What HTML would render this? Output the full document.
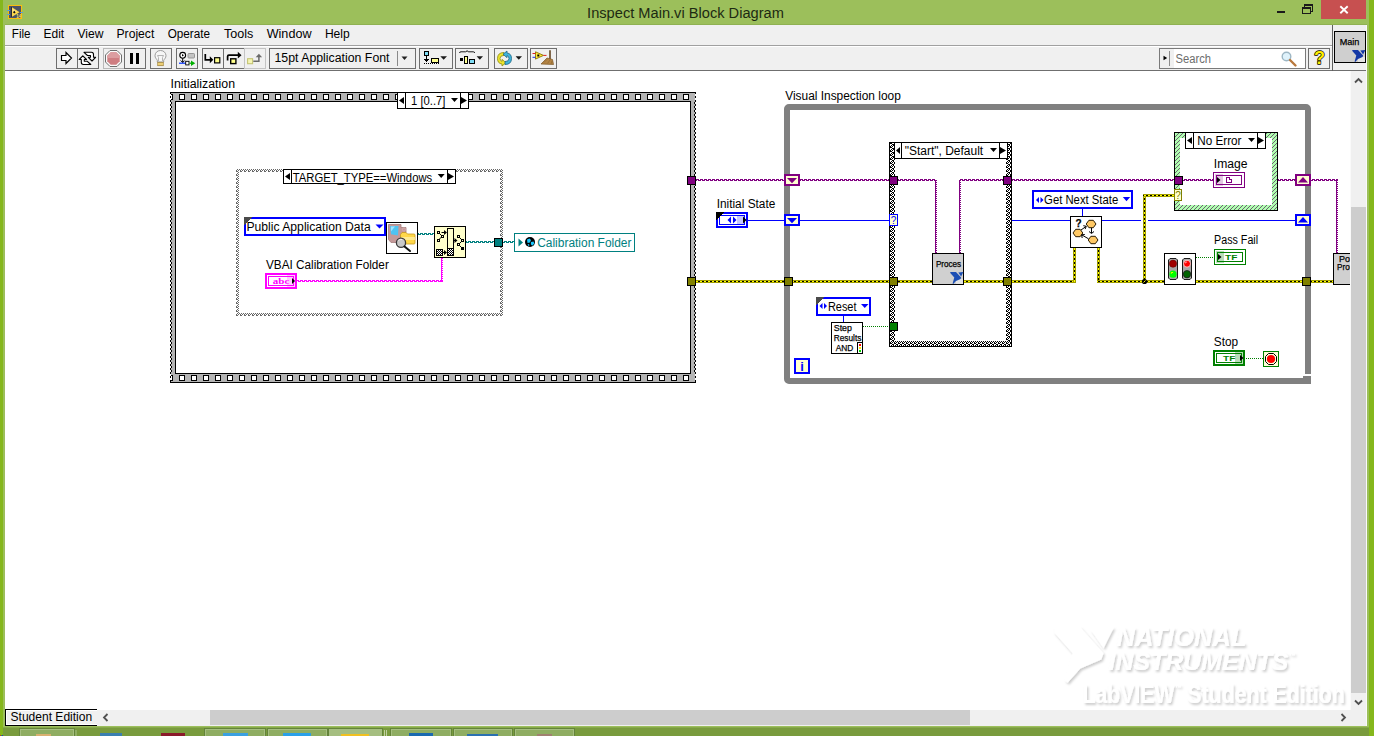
<!DOCTYPE html>
<html><head><meta charset="utf-8"><title>Inspect Main.vi Block Diagram</title>
<style>
html,body{margin:0;padding:0;background:#86b81c;overflow:hidden}
svg{display:block;font-family:"Liberation Sans",sans-serif}
text{white-space:pre}
</style></head><body>
<svg width="1374" height="736" viewBox="0 0 1374 736" shape-rendering="crispEdges">
<defs>
<pattern id="chk" x="2" y="0" width="4" height="4" patternUnits="userSpaceOnUse"><rect width="4" height="4" fill="#fff"/><rect x="2" y="0" width="1" height="1" fill="#000"/><rect x="3" y="0" width="1" height="1" fill="#000"/><rect x="1" y="1" width="1" height="1" fill="#000"/><rect x="3" y="1" width="1" height="1" fill="#000"/><rect x="0" y="2" width="1" height="1" fill="#000"/><rect x="2" y="2" width="1" height="1" fill="#000"/><rect x="0" y="3" width="1" height="1" fill="#000"/><rect x="1" y="3" width="1" height="1" fill="#000"/></pattern>
<pattern id="gchk" x="0" y="0" width="4" height="4" patternUnits="userSpaceOnUse"><rect width="4" height="4" fill="#fff"/><rect x="2" y="0" width="1" height="1" fill="#686868"/><rect x="3" y="0" width="1" height="1" fill="#686868"/><rect x="1" y="1" width="1" height="1" fill="#686868"/><rect x="3" y="1" width="1" height="1" fill="#686868"/><rect x="0" y="2" width="1" height="1" fill="#686868"/><rect x="2" y="2" width="1" height="1" fill="#686868"/><rect x="0" y="3" width="1" height="1" fill="#686868"/><rect x="1" y="3" width="1" height="1" fill="#686868"/></pattern>
<pattern id="chk1" width="2" height="2" patternUnits="userSpaceOnUse"><rect width="2" height="2" fill="#fff"/><rect x="0" y="0" width="1" height="1" fill="#000"/><rect x="1" y="1" width="1" height="1" fill="#000"/></pattern>
<pattern id="ghatch" width="4" height="4" patternUnits="userSpaceOnUse"><rect width="4" height="4" fill="#b0ffb0"/><rect x="3" y="0" width="1" height="1" fill="#6c6272"/><rect x="2" y="1" width="1" height="1" fill="#6c6272"/><rect x="1" y="2" width="1" height="1" fill="#6c6272"/><rect x="0" y="3" width="1" height="1" fill="#6c6272"/></pattern>
<filter id="wsh" x="-5%" y="-20%" width="110%" height="150%"><feDropShadow dx="1.5" dy="2" stdDeviation="1.2" flood-color="#000" flood-opacity="0.2"/></filter>
</defs>
<rect x="0" y="0" width="1374" height="736" fill="#85b71c"/>
<rect x="3" y="0" width="1366" height="728" fill="#9cbf5b"/>
<rect x="5" y="24" width="1362" height="1" fill="#8fb152"/>
<rect x="5" y="25" width="1362" height="701" fill="#f0f0f0"/>
<text x="587.1" y="18" font-size="14.67" fill="#1d2a12" textLength="196.8" lengthAdjust="spacingAndGlyphs">Inspect Main.vi Block Diagram</text>
<rect x="8" y="5" width="14" height="14" fill="#fcbc0c"/>
<rect x="9" y="6" width="12" height="12" fill="#4c5264"/>
<rect x="11" y="7" width="1" height="10" fill="#2c2c34"/>
<polygon points="12,7.3 12,16.7 19.6,12.2" fill="#ffd84c" shape-rendering="geometricPrecision"/>
<polygon points="12.5,8.5 12.5,12 17,12" fill="#ffe88c" shape-rendering="geometricPrecision"/>
<polygon points="13,12.2 14.3,10.8 15.6,12.2 14.3,13.6" fill="#101010" shape-rendering="geometricPrecision"/>
<rect x="7" y="10" width="3" height="1" fill="#5c9cd4"/>
<rect x="7" y="14" width="3" height="1" fill="#5c9cd4"/>
<rect x="20" y="12" width="3" height="1" fill="#5c9cd4"/>
<text x="16.3" y="17.6" font-size="4.5" fill="#ffe060" font-weight="bold" shape-rendering="geometricPrecision">14</text>
<rect x="1277" y="11" width="8" height="2" fill="#1a1a1a"/>
<rect x="1304" y="4" width="9" height="2" fill="#1a1a1a"/>
<rect x="1312" y="4" width="1" height="8" fill="#1a1a1a"/>
<rect x="1310" y="11" width="3" height="1" fill="#1a1a1a"/>
<rect x="1304" y="4" width="1" height="4" fill="#1a1a1a"/>
<rect x="1302" y="7" width="9" height="2" fill="#1a1a1a"/>
<rect x="1302" y="7" width="1" height="7" fill="#1a1a1a"/>
<rect x="1310" y="7" width="1" height="7" fill="#1a1a1a"/>
<rect x="1302" y="13" width="9" height="1" fill="#1a1a1a"/>
<rect x="1321" y="0" width="45" height="19" fill="#c75050"/>
<path d="M1340.300 6.300l7.400 6.900M1347.700 6.300l-7.400 6.900" stroke="#fff" stroke-width="1.900" shape-rendering="geometricPrecision"/>
<text x="11.8" y="38" font-size="12" fill="#000" textLength="18.8" lengthAdjust="spacingAndGlyphs">File</text>
<text x="43.5" y="38" font-size="12" fill="#000" textLength="20.7" lengthAdjust="spacingAndGlyphs">Edit</text>
<text x="77.5" y="38" font-size="12" fill="#000" textLength="26.0" lengthAdjust="spacingAndGlyphs">View</text>
<text x="116.5" y="38" font-size="12" fill="#000" textLength="37.8" lengthAdjust="spacingAndGlyphs">Project</text>
<text x="167.7" y="38" font-size="12" fill="#000" textLength="42.4" lengthAdjust="spacingAndGlyphs">Operate</text>
<text x="224.0" y="38" font-size="12" fill="#000" textLength="29.3" lengthAdjust="spacingAndGlyphs">Tools</text>
<text x="266.7" y="38" font-size="12" fill="#000" textLength="44.8" lengthAdjust="spacingAndGlyphs">Window</text>
<text x="324.9" y="38" font-size="12" fill="#000" textLength="24.8" lengthAdjust="spacingAndGlyphs">Help</text>
<rect x="5" y="45" width="1327" height="1" fill="#a0a0a0"/>
<rect x="5" y="46" width="1327" height="1" fill="#ffffff"/>
<rect x="5" y="70" width="1362" height="1" fill="#6f6f6f"/>
<rect x="1332" y="25" width="1" height="46" fill="#5f5f5f"/>
<rect x="56.5" y="48.5" width="21" height="20" fill="#f0f0f0" stroke="#6e6e6e" stroke-width="1"/>
<rect x="77.5" y="48.5" width="21" height="20" fill="#f0f0f0" stroke="#6e6e6e" stroke-width="1"/>
<rect x="124.5" y="48.5" width="21" height="20" fill="#f0f0f0" stroke="#6e6e6e" stroke-width="1"/>
<rect x="150.5" y="48.5" width="21" height="20" fill="#f0f0f0" stroke="#6e6e6e" stroke-width="1"/>
<rect x="176.5" y="48.5" width="21" height="20" fill="#f0f0f0" stroke="#6e6e6e" stroke-width="1"/>
<rect x="202.5" y="48.5" width="21" height="20" fill="#f0f0f0" stroke="#6e6e6e" stroke-width="1"/>
<rect x="223.5" y="48.5" width="21" height="20" fill="#f0f0f0" stroke="#6e6e6e" stroke-width="1"/>
<rect x="269.5" y="48.5" width="146" height="20" fill="#f0f0f0" stroke="#6e6e6e" stroke-width="1"/>
<rect x="419.5" y="48.5" width="33" height="20" fill="#f0f0f0" stroke="#6e6e6e" stroke-width="1"/>
<rect x="455.5" y="48.5" width="33" height="20" fill="#f0f0f0" stroke="#6e6e6e" stroke-width="1"/>
<rect x="494.5" y="48.5" width="33" height="20" fill="#f0f0f0" stroke="#6e6e6e" stroke-width="1"/>
<rect x="530.5" y="48.5" width="26" height="20" fill="#f0f0f0" stroke="#6e6e6e" stroke-width="1"/>
<rect x="103.5" y="48.5" width="21" height="20" fill="#f0f0f0" stroke="#b9b9b9" stroke-width="1"/>
<rect x="124.5" y="48.5" width="21" height="20" fill="#f0f0f0" stroke="#6e6e6e" stroke-width="1"/>
<rect x="244.5" y="48.5" width="21" height="20" fill="#f0f0f0" stroke="#c4c4c4" stroke-width="1"/>
<path d="M61.5 55.5h4.5v-3l5.5 5.5-5.5 5.5v-3h-4.500z" fill="#fff" stroke="#000" stroke-width="1.150" shape-rendering="geometricPrecision"/>
<g shape-rendering="geometricPrecision" fill="#fff" stroke="#000" stroke-width="1.100" stroke-linejoin="round"><path d="M84 52.300H91.500Q93.500 52.300 93.500 54.500V57.300H95.600L92 61L88.300 57.300H90.500V55.500H87.500Z"/><path d="M84 52.300H91.500Q93.500 52.300 93.500 54.500V57.300H95.600L92 61L88.300 57.300H90.500V55.500H87.500Z" transform="rotate(180 87.400 58.400)"/></g>
<polygon points="110,50.500 117,50.500 121.500,55 121.500,62 117,66.500 110,66.500 105.500,62 105.500,55" fill="#fafafa" stroke="#6f6f6f" stroke-width="1" shape-rendering="geometricPrecision"/>
<polygon points="110.700,52.300 116.300,52.300 119.700,55.700 119.700,61.300 116.300,64.700 110.700,64.700 107.300,61.300 107.300,55.700" fill="#cf7e82" shape-rendering="geometricPrecision"/>
<polygon points="110.700,52.300 116.300,52.300 119.700,55.700 119.700,58 107.300,58 107.300,55.700" fill="#dc9da0" shape-rendering="geometricPrecision"/>
<rect x="130" y="53" width="3" height="11" fill="#000"/>
<rect x="136" y="53" width="3" height="11" fill="#000"/>
<g shape-rendering="geometricPrecision"><path d="M160.500 50.500c-3.300 0-5.500 2.400-5.500 5.200 0 2.200 1.600 3.300 2.300 4.600v1.700h6.400v-1.700c.7-1.300 2.300-2.400 2.300-4.600 0-2.800-2.200-5.200-5.500-5.200z" fill="#f6f6f6" stroke="#9c9c9c" stroke-width="1"/><path d="M158.500 61v-3.500l-1-2h6l-1 2v3.500" fill="none" stroke="#b4b4b4" stroke-width="1"/><rect x="157.700" y="62.300" width="5.600" height="3.400" fill="#e0b84e" stroke="#9c8240" stroke-width=".7"/><path d="M157.700 64h5.600" stroke="#fff1b0" stroke-width=".8"/></g>
<g shape-rendering="geometricPrecision"><circle cx="182.700" cy="55.300" r="2.900" fill="#fff" stroke="#000" stroke-width="1.100"/><path d="M182 54v2.600l2-1.300z" fill="#000"/><path d="M182.700 58.200v4.500M180.700 60.500l2 2 2-2" stroke="#000" fill="none"/><rect x="188" y="53.500" width="6.500" height="4.500" rx=".8" fill="#c4c4c4" stroke="#8e8e8e" stroke-width=".9"/><path d="M179 63.200h7" stroke="#0030ff" stroke-width="1.200"/><rect x="185.700" y="61.300" width="3.300" height="3.600" fill="#fff" stroke="#000" stroke-width=".9"/><path d="M189.500 63.200h2" stroke="#00a000" stroke-width="1.200"/><path d="M191 60.500l4.200 2.700-4.200 2.700z" fill="#00b000"/></g>
<g shape-rendering="geometricPrecision"><path d="M205.300 54v5.800h5" fill="none" stroke="#000" stroke-width="1.700"/><path d="M209.800 56.300l3.500 3.500-3.500 3.500z" fill="#000"/><rect x="214.600" y="57.700" width="5.200" height="5.200" fill="#ffff8c" stroke="#000" stroke-width="1.200"/></g>
<g shape-rendering="geometricPrecision"><path d="M227.600 60.500v-4q0-1.300 1.300-1.300h9.500" fill="none" stroke="#000" stroke-width="1.700"/><path d="M237.800 51.800l3.700 3.400-3.700 3.400z" fill="#000"/><rect x="230.700" y="58.800" width="5.200" height="4.800" fill="#ffff8c" stroke="#000" stroke-width="1.400"/></g>
<g shape-rendering="geometricPrecision"><rect x="247.600" y="58.700" width="5" height="5" fill="#f6f6b4" stroke="#c4c474" stroke-width="1.100"/><path d="M253.300 61.300h5.600v-5" fill="none" stroke="#6a6a6a" stroke-width="1.500"/><path d="M255.700 57.300l3.200-3.500 3.200 3.500z" fill="#6a6a6a"/></g>
<text x="274.5" y="62" font-size="12" fill="#000" textLength="115.0" lengthAdjust="spacingAndGlyphs">15pt Application Font</text>
<rect x="397" y="51" width="1" height="15" fill="#8a8a8a"/>
<polygon points="401.5,56.5 407.5,56.5 404.5,60" fill="#222" shape-rendering="geometricPrecision"/>
<rect x="424" y="51" width="5" height="5" fill="#000"/>
<rect x="425" y="52" width="3" height="3" fill="#7fdcf4"/>
<rect x="426" y="56" width="1" height="6" fill="#000"/>
<rect x="424" y="59" width="5" height="1" fill="#000"/>
<rect x="425" y="60" width="3" height="1" fill="#000"/>
<path d="M424 63.500H440" stroke="#000" stroke-width="1" stroke-dasharray="1 1"/>
<rect x="431" y="58" width="8" height="5" fill="#000"/>
<rect x="432" y="59" width="6" height="3" fill="#ffff90"/>
<polygon points="440.3,56.3 447,56.3 443.65,59.8" fill="#1a1a1a" shape-rendering="geometricPrecision"/>
<path d="M459.500 53q0-1.200 1.500-1.200h4.500q1.200 0 1.600-1.200q.4 1.200 1.600 1.200h4.500q1.500 0 1.500 1.200" fill="none" stroke="#000" stroke-width=".9" shape-rendering="geometricPrecision"/>
<rect x="460" y="58" width="3" height="3" fill="#000"/>
<rect x="464" y="56" width="4" height="8" fill="#000"/>
<rect x="465" y="57" width="2" height="6" fill="#ffff90"/>
<rect x="469" y="59" width="6" height="5" fill="#000"/>
<rect x="470" y="60" width="4" height="3" fill="#7fdcf4"/>
<polygon points="476.6,56.3 483,56.3 479.8,59.8" fill="#1a1a1a" shape-rendering="geometricPrecision"/>
<g shape-rendering="geometricPrecision"><path d="M504 52.500q-6.500 0-6.500 6 0 5 4.500 5.500v2l4-3.300-4-3.300v2q-2-.5-2-3 0-3 4-3z" fill="#ece42c" stroke="#8c8a10" stroke-width=".8"/><path d="M505 64.500q6.500 0 6.500-6 0-5-4.500-5.500v-2l-4 3.300 4 3.300v-2q2 .5 2 3 0 3-4 3z" fill="#3fb4dc" stroke="#1c6484" stroke-width=".8"/></g>
<polygon points="515.6,56.3 522,56.3 518.8,59.8" fill="#1a1a1a" shape-rendering="geometricPrecision"/>
<g shape-rendering="geometricPrecision"><path d="M535.500 51.800l8 3.600-8 3.700z" fill="#ffe838" stroke="#8a7400" stroke-width=".9"/><path d="M532.500 53.500h3" stroke="#e02020" stroke-width="1"/><path d="M532.500 57.300h3" stroke="#2030e0" stroke-width="1"/><rect x="537.300" y="54.500" width="2" height="2" fill="#000"/><path d="M543.500 55.400h3" stroke="#e02020" stroke-width="1"/><path d="M550 50.300v9" stroke="#5a3a14" stroke-width="1.500"/><path d="M547 58l5.500 1.500 1 5-12.500-.5z" fill="#b48444" stroke="#7a5424" stroke-width=".7"/><path d="M544 62.500l3-3M547.500 63.500l2.500-3.500M551 64l1-3" stroke="#8a6430" stroke-width=".6"/></g>
<rect x="1159.5" y="48.5" width="146" height="20" fill="#ffffff" stroke="#7a7a7a" stroke-width="1"/>
<rect x="1160" y="49" width="14" height="19" fill="#f0f0f0"/>
<rect x="1169" y="51" width="1" height="15" fill="#8c8c8c"/>
<polygon points="1163.5,55.8 1163.5,60.2 1167.2,58" fill="#000" shape-rendering="geometricPrecision"/>
<text x="1175.5" y="63" font-size="12" fill="#6d6d6d" textLength="35.5" lengthAdjust="spacingAndGlyphs">Search</text>
<g shape-rendering="geometricPrecision"><circle cx="1286.500" cy="56.500" r="4.300" fill="#dff2fb" stroke="#9db6c4" stroke-width="1.400"/><path d="M1290 60l5.500 5.500" stroke="#b9793d" stroke-width="2.400" stroke-linecap="round"/></g>
<rect x="1308.5" y="48.5" width="21" height="20" fill="#f0f0f0" stroke="#6e6e6e" stroke-width="1"/>
<text x="1319.5" y="64.3" font-size="18" fill="#ffee00" text-anchor="middle" font-weight="bold" shape-rendering="geometricPrecision" stroke="#000" stroke-width="1.4" paint-order="stroke" stroke-linejoin="round">?</text>
<rect x="1334" y="31" width="32" height="32" fill="#000"/>
<rect x="1335" y="32" width="30" height="30" fill="#cfcfcf"/>
<text x="1339.7" y="44.5" font-size="9" fill="#000" textLength="19.7" lengthAdjust="spacingAndGlyphs" stroke="#000" stroke-width="0.25">Main</text>
<rect x="1358" y="57" width="7" height="5" fill="#e4e4e4"/>
<polygon points="1352.3,49.9 1358.0,49.9 1363.1,55.6 1362.6,57.0 1358.0,59.0 1355.2,62.1 1354.6,61.6 1356.3,55.6 1352.3,51.1" fill="#1438a6" shape-rendering="geometricPrecision"/>
<polygon points="1360.3,50.5 1365.4,49.9 1363.1,54.5" fill="#1438a6" shape-rendering="geometricPrecision"/>
<rect x="5" y="71" width="1346" height="639" fill="#ffffff"/>
<text x="170.5" y="88" font-size="12" fill="#000" textLength="64.5" lengthAdjust="spacingAndGlyphs">Initialization</text>
<rect x="170" y="92" width="526" height="291" fill="#fff"/>
<rect x="170" y="92" width="526" height="1" fill="#000"/>
<rect x="170" y="382" width="526" height="1" fill="#000"/>
<rect x="171" y="93" width="524" height="289" fill="#b4b4b4"/>
<rect x="175" y="101" width="516" height="273" fill="#000"/>
<rect x="176" y="102" width="514" height="271" fill="#fff"/>
<path d="M170.500 92V382M695.500 92V382" stroke="#000" stroke-width="1" stroke-dasharray="2 2" fill="none"/>
<path d="M171.500 102V373M694.500 102V373" stroke="#000" stroke-width="1" stroke-dasharray="2 2" stroke-dashoffset="0" fill="none"/>
<rect x="171" y="94" width="2" height="6" fill="#000"/>
<rect x="171" y="95" width="1" height="4" fill="#fff"/>
<rect x="171" y="375" width="2" height="6" fill="#000"/>
<rect x="171" y="376" width="1" height="4" fill="#fff"/>
<rect x="179" y="94" width="6" height="6" fill="#000"/>
<rect x="180" y="95" width="4" height="4" fill="#fff"/>
<rect x="179" y="375" width="6" height="6" fill="#000"/>
<rect x="180" y="376" width="4" height="4" fill="#fff"/>
<rect x="191" y="94" width="6" height="6" fill="#000"/>
<rect x="192" y="95" width="4" height="4" fill="#fff"/>
<rect x="191" y="375" width="6" height="6" fill="#000"/>
<rect x="192" y="376" width="4" height="4" fill="#fff"/>
<rect x="203" y="94" width="6" height="6" fill="#000"/>
<rect x="204" y="95" width="4" height="4" fill="#fff"/>
<rect x="203" y="375" width="6" height="6" fill="#000"/>
<rect x="204" y="376" width="4" height="4" fill="#fff"/>
<rect x="215" y="94" width="6" height="6" fill="#000"/>
<rect x="216" y="95" width="4" height="4" fill="#fff"/>
<rect x="215" y="375" width="6" height="6" fill="#000"/>
<rect x="216" y="376" width="4" height="4" fill="#fff"/>
<rect x="227" y="94" width="6" height="6" fill="#000"/>
<rect x="228" y="95" width="4" height="4" fill="#fff"/>
<rect x="227" y="375" width="6" height="6" fill="#000"/>
<rect x="228" y="376" width="4" height="4" fill="#fff"/>
<rect x="239" y="94" width="6" height="6" fill="#000"/>
<rect x="240" y="95" width="4" height="4" fill="#fff"/>
<rect x="239" y="375" width="6" height="6" fill="#000"/>
<rect x="240" y="376" width="4" height="4" fill="#fff"/>
<rect x="251" y="94" width="6" height="6" fill="#000"/>
<rect x="252" y="95" width="4" height="4" fill="#fff"/>
<rect x="251" y="375" width="6" height="6" fill="#000"/>
<rect x="252" y="376" width="4" height="4" fill="#fff"/>
<rect x="263" y="94" width="6" height="6" fill="#000"/>
<rect x="264" y="95" width="4" height="4" fill="#fff"/>
<rect x="263" y="375" width="6" height="6" fill="#000"/>
<rect x="264" y="376" width="4" height="4" fill="#fff"/>
<rect x="275" y="94" width="6" height="6" fill="#000"/>
<rect x="276" y="95" width="4" height="4" fill="#fff"/>
<rect x="275" y="375" width="6" height="6" fill="#000"/>
<rect x="276" y="376" width="4" height="4" fill="#fff"/>
<rect x="287" y="94" width="6" height="6" fill="#000"/>
<rect x="288" y="95" width="4" height="4" fill="#fff"/>
<rect x="287" y="375" width="6" height="6" fill="#000"/>
<rect x="288" y="376" width="4" height="4" fill="#fff"/>
<rect x="299" y="94" width="6" height="6" fill="#000"/>
<rect x="300" y="95" width="4" height="4" fill="#fff"/>
<rect x="299" y="375" width="6" height="6" fill="#000"/>
<rect x="300" y="376" width="4" height="4" fill="#fff"/>
<rect x="311" y="94" width="6" height="6" fill="#000"/>
<rect x="312" y="95" width="4" height="4" fill="#fff"/>
<rect x="311" y="375" width="6" height="6" fill="#000"/>
<rect x="312" y="376" width="4" height="4" fill="#fff"/>
<rect x="323" y="94" width="6" height="6" fill="#000"/>
<rect x="324" y="95" width="4" height="4" fill="#fff"/>
<rect x="323" y="375" width="6" height="6" fill="#000"/>
<rect x="324" y="376" width="4" height="4" fill="#fff"/>
<rect x="335" y="94" width="6" height="6" fill="#000"/>
<rect x="336" y="95" width="4" height="4" fill="#fff"/>
<rect x="335" y="375" width="6" height="6" fill="#000"/>
<rect x="336" y="376" width="4" height="4" fill="#fff"/>
<rect x="347" y="94" width="6" height="6" fill="#000"/>
<rect x="348" y="95" width="4" height="4" fill="#fff"/>
<rect x="347" y="375" width="6" height="6" fill="#000"/>
<rect x="348" y="376" width="4" height="4" fill="#fff"/>
<rect x="359" y="94" width="6" height="6" fill="#000"/>
<rect x="360" y="95" width="4" height="4" fill="#fff"/>
<rect x="359" y="375" width="6" height="6" fill="#000"/>
<rect x="360" y="376" width="4" height="4" fill="#fff"/>
<rect x="371" y="94" width="6" height="6" fill="#000"/>
<rect x="372" y="95" width="4" height="4" fill="#fff"/>
<rect x="371" y="375" width="6" height="6" fill="#000"/>
<rect x="372" y="376" width="4" height="4" fill="#fff"/>
<rect x="383" y="94" width="6" height="6" fill="#000"/>
<rect x="384" y="95" width="4" height="4" fill="#fff"/>
<rect x="383" y="375" width="6" height="6" fill="#000"/>
<rect x="384" y="376" width="4" height="4" fill="#fff"/>
<rect x="395" y="94" width="6" height="6" fill="#000"/>
<rect x="396" y="95" width="4" height="4" fill="#fff"/>
<rect x="395" y="375" width="6" height="6" fill="#000"/>
<rect x="396" y="376" width="4" height="4" fill="#fff"/>
<rect x="407" y="94" width="6" height="6" fill="#000"/>
<rect x="408" y="95" width="4" height="4" fill="#fff"/>
<rect x="407" y="375" width="6" height="6" fill="#000"/>
<rect x="408" y="376" width="4" height="4" fill="#fff"/>
<rect x="419" y="94" width="6" height="6" fill="#000"/>
<rect x="420" y="95" width="4" height="4" fill="#fff"/>
<rect x="419" y="375" width="6" height="6" fill="#000"/>
<rect x="420" y="376" width="4" height="4" fill="#fff"/>
<rect x="431" y="94" width="6" height="6" fill="#000"/>
<rect x="432" y="95" width="4" height="4" fill="#fff"/>
<rect x="431" y="375" width="6" height="6" fill="#000"/>
<rect x="432" y="376" width="4" height="4" fill="#fff"/>
<rect x="443" y="94" width="6" height="6" fill="#000"/>
<rect x="444" y="95" width="4" height="4" fill="#fff"/>
<rect x="443" y="375" width="6" height="6" fill="#000"/>
<rect x="444" y="376" width="4" height="4" fill="#fff"/>
<rect x="455" y="94" width="6" height="6" fill="#000"/>
<rect x="456" y="95" width="4" height="4" fill="#fff"/>
<rect x="455" y="375" width="6" height="6" fill="#000"/>
<rect x="456" y="376" width="4" height="4" fill="#fff"/>
<rect x="467" y="94" width="6" height="6" fill="#000"/>
<rect x="468" y="95" width="4" height="4" fill="#fff"/>
<rect x="467" y="375" width="6" height="6" fill="#000"/>
<rect x="468" y="376" width="4" height="4" fill="#fff"/>
<rect x="479" y="94" width="6" height="6" fill="#000"/>
<rect x="480" y="95" width="4" height="4" fill="#fff"/>
<rect x="479" y="375" width="6" height="6" fill="#000"/>
<rect x="480" y="376" width="4" height="4" fill="#fff"/>
<rect x="491" y="94" width="6" height="6" fill="#000"/>
<rect x="492" y="95" width="4" height="4" fill="#fff"/>
<rect x="491" y="375" width="6" height="6" fill="#000"/>
<rect x="492" y="376" width="4" height="4" fill="#fff"/>
<rect x="503" y="94" width="6" height="6" fill="#000"/>
<rect x="504" y="95" width="4" height="4" fill="#fff"/>
<rect x="503" y="375" width="6" height="6" fill="#000"/>
<rect x="504" y="376" width="4" height="4" fill="#fff"/>
<rect x="515" y="94" width="6" height="6" fill="#000"/>
<rect x="516" y="95" width="4" height="4" fill="#fff"/>
<rect x="515" y="375" width="6" height="6" fill="#000"/>
<rect x="516" y="376" width="4" height="4" fill="#fff"/>
<rect x="527" y="94" width="6" height="6" fill="#000"/>
<rect x="528" y="95" width="4" height="4" fill="#fff"/>
<rect x="527" y="375" width="6" height="6" fill="#000"/>
<rect x="528" y="376" width="4" height="4" fill="#fff"/>
<rect x="539" y="94" width="6" height="6" fill="#000"/>
<rect x="540" y="95" width="4" height="4" fill="#fff"/>
<rect x="539" y="375" width="6" height="6" fill="#000"/>
<rect x="540" y="376" width="4" height="4" fill="#fff"/>
<rect x="551" y="94" width="6" height="6" fill="#000"/>
<rect x="552" y="95" width="4" height="4" fill="#fff"/>
<rect x="551" y="375" width="6" height="6" fill="#000"/>
<rect x="552" y="376" width="4" height="4" fill="#fff"/>
<rect x="563" y="94" width="6" height="6" fill="#000"/>
<rect x="564" y="95" width="4" height="4" fill="#fff"/>
<rect x="563" y="375" width="6" height="6" fill="#000"/>
<rect x="564" y="376" width="4" height="4" fill="#fff"/>
<rect x="575" y="94" width="6" height="6" fill="#000"/>
<rect x="576" y="95" width="4" height="4" fill="#fff"/>
<rect x="575" y="375" width="6" height="6" fill="#000"/>
<rect x="576" y="376" width="4" height="4" fill="#fff"/>
<rect x="587" y="94" width="6" height="6" fill="#000"/>
<rect x="588" y="95" width="4" height="4" fill="#fff"/>
<rect x="587" y="375" width="6" height="6" fill="#000"/>
<rect x="588" y="376" width="4" height="4" fill="#fff"/>
<rect x="599" y="94" width="6" height="6" fill="#000"/>
<rect x="600" y="95" width="4" height="4" fill="#fff"/>
<rect x="599" y="375" width="6" height="6" fill="#000"/>
<rect x="600" y="376" width="4" height="4" fill="#fff"/>
<rect x="611" y="94" width="6" height="6" fill="#000"/>
<rect x="612" y="95" width="4" height="4" fill="#fff"/>
<rect x="611" y="375" width="6" height="6" fill="#000"/>
<rect x="612" y="376" width="4" height="4" fill="#fff"/>
<rect x="623" y="94" width="6" height="6" fill="#000"/>
<rect x="624" y="95" width="4" height="4" fill="#fff"/>
<rect x="623" y="375" width="6" height="6" fill="#000"/>
<rect x="624" y="376" width="4" height="4" fill="#fff"/>
<rect x="635" y="94" width="6" height="6" fill="#000"/>
<rect x="636" y="95" width="4" height="4" fill="#fff"/>
<rect x="635" y="375" width="6" height="6" fill="#000"/>
<rect x="636" y="376" width="4" height="4" fill="#fff"/>
<rect x="647" y="94" width="6" height="6" fill="#000"/>
<rect x="648" y="95" width="4" height="4" fill="#fff"/>
<rect x="647" y="375" width="6" height="6" fill="#000"/>
<rect x="648" y="376" width="4" height="4" fill="#fff"/>
<rect x="659" y="94" width="6" height="6" fill="#000"/>
<rect x="660" y="95" width="4" height="4" fill="#fff"/>
<rect x="659" y="375" width="6" height="6" fill="#000"/>
<rect x="660" y="376" width="4" height="4" fill="#fff"/>
<rect x="671" y="94" width="6" height="6" fill="#000"/>
<rect x="672" y="95" width="4" height="4" fill="#fff"/>
<rect x="671" y="375" width="6" height="6" fill="#000"/>
<rect x="672" y="376" width="4" height="4" fill="#fff"/>
<rect x="683" y="94" width="6" height="6" fill="#000"/>
<rect x="684" y="95" width="4" height="4" fill="#fff"/>
<rect x="683" y="375" width="6" height="6" fill="#000"/>
<rect x="684" y="376" width="4" height="4" fill="#fff"/>
<rect x="397" y="92" width="72" height="17" fill="#000"/>
<rect x="398" y="93" width="70" height="15" fill="#fff"/>
<rect x="405" y="92" width="1" height="17" fill="#000"/>
<rect x="460" y="92" width="1" height="17" fill="#000"/>
<polygon points="404,97.0 404,104.0 399,100.5" fill="#000" shape-rendering="geometricPrecision"/>
<polygon points="461,97.0 461,104.0 467,100.5" fill="#000" shape-rendering="geometricPrecision"/>
<text x="411.1" y="105" font-size="12" fill="#000" textLength="34.4" lengthAdjust="spacingAndGlyphs">1 [0..7]</text>
<polygon points="451,98.0 458,98.0 454.5,102.0" fill="#000" shape-rendering="geometricPrecision"/>
<rect x="236" y="169" width="267" height="147" fill="url(#gchk)"/>
<rect x="239" y="172" width="261" height="141" fill="#fff"/>
<rect x="283" y="169" width="173" height="15" fill="#000"/>
<rect x="284" y="170" width="171" height="13" fill="#fff"/>
<rect x="291" y="169" width="1" height="15" fill="#000"/>
<rect x="447" y="169" width="1" height="15" fill="#000"/>
<polygon points="290,173.0 290,180.0 285,176.5" fill="#000" shape-rendering="geometricPrecision"/>
<polygon points="448,173.0 448,180.0 454,176.5" fill="#000" shape-rendering="geometricPrecision"/>
<text x="292.7" y="182" font-size="12" fill="#000" textLength="139.5" lengthAdjust="spacingAndGlyphs">TARGET_TYPE==Windows</text>
<polygon points="437.7,174.0 444.7,174.0 441.2,178.0" fill="#000" shape-rendering="geometricPrecision"/>
<rect x="244" y="217" width="142" height="19" fill="#0000ff"/>
<rect x="246" y="219" width="138" height="15" fill="#fff"/>
<polygon points="244,217 252,217 244,225" fill="#4a4a4a"/>
<text x="246.5" y="231" font-size="12" fill="#000" textLength="124.2" lengthAdjust="spacingAndGlyphs">Public Application Data</text>
<polygon points="375.5,224.5 383.5,224.5 379.5,228.5" fill="#0000ff" shape-rendering="geometricPrecision"/>
<rect x="386" y="222" width="32" height="32" fill="#000"/>
<rect x="387" y="223" width="30" height="30" fill="#fff"/>
<g shape-rendering="geometricPrecision"><path d="M388.500 224.500h12.500v3h5v14h-4.500l-2 1h-8.500l-2.500-3z" fill="#c49a9a" stroke="#a47c7c" stroke-width=".8"/><path d="M390 226h8.500l-.5 9.500-7-1.200z" fill="#4fc3f2"/><path d="M391 226.500l4 0 -4 5z" fill="#9fe4ff"/><circle cx="404" cy="229.500" r="1.600" fill="none" stroke="#d8b0b0" stroke-width=".8"/><path d="M400.500 234.500l1.500-2h4l1.500 1.500h6.500q1 0 1 1v8q0 1-1 1h-12.500q-1 0-1-1z" fill="#ffd84a" stroke="#c89a1e" stroke-width=".8"/><path d="M401 237h14v3h-14z" fill="#fff3b0" opacity=".7"/><circle cx="401" cy="242.700" r="4.600" fill="#c9c9c9" stroke="#3a3a3a" stroke-width="1.300"/><path d="M398.500 240.500a3 3 0 0 1 3.500-1" stroke="#f4f4f4" stroke-width="1" fill="none"/><path d="M404.500 246.500l5.500 4.500" stroke="#111" stroke-width="2" stroke-linecap="round"/></g>
<path d="M418 233.5H434" stroke="#008080" stroke-width="1" stroke-dasharray="3 1" stroke-dashoffset="2"/>
<path d="M418 234.5H434" stroke="#008080" stroke-width="1" stroke-dasharray="3 1" stroke-dashoffset="0"/>
<path d="M466 241.5H494" stroke="#008080" stroke-width="1" stroke-dasharray="3 1" stroke-dashoffset="2"/>
<path d="M466 242.5H494" stroke="#008080" stroke-width="1" stroke-dasharray="3 1" stroke-dashoffset="0"/>
<path d="M503 241.5H514" stroke="#008080" stroke-width="1" stroke-dasharray="3 1" stroke-dashoffset="3"/>
<path d="M503 242.5H514" stroke="#008080" stroke-width="1" stroke-dasharray="3 1" stroke-dashoffset="1"/>
<rect x="434" y="226" width="32" height="32" fill="#000"/>
<rect x="435" y="227" width="30" height="30" fill="#ffffcb"/>
<rect x="447" y="228" width="7" height="28" fill="#000"/>
<rect x="448" y="229" width="5" height="26" fill="#ffffcb"/>
<rect x="448" y="249" width="5" height="6" fill="url(#chk1)"/>
<rect x="447" y="248" width="7" height="1" fill="#000"/>
<rect x="436" y="249" width="7" height="7" fill="#000"/>
<rect x="437" y="250" width="5" height="5" fill="url(#chk1)"/>
<g shape-rendering="geometricPrecision" stroke="#000" fill="none" stroke-width="1"><path d="M439 233l2.500 2.500M439 239.500l2.500-2.500M441.500 232.500h3.500M443 252.500h2M454 240.500h2M459.500 237.500l2 2M459.500 243.500l2-2M459.500 245.500l2 2"/><path d="M444 230l3 2.500-3 2.500zM444 250l3 2.500-3 2.500zM454.500 238l3 2.500-3 2.500z" fill="#000" stroke="none"/></g>
<rect x="437" y="231" width="3" height="3" fill="#000"/>
<rect x="438" y="232" width="1" height="1" fill="#ffffcb"/>
<rect x="441" y="235" width="3" height="3" fill="#000"/>
<rect x="442" y="236" width="1" height="1" fill="#ffffcb"/>
<rect x="437" y="239" width="3" height="3" fill="#000"/>
<rect x="438" y="240" width="1" height="1" fill="#ffffcb"/>
<rect x="457" y="235" width="3" height="3" fill="#000"/>
<rect x="458" y="236" width="1" height="1" fill="#ffffcb"/>
<rect x="461" y="239" width="3" height="3" fill="#000"/>
<rect x="462" y="240" width="1" height="1" fill="#ffffcb"/>
<rect x="457" y="243" width="3" height="3" fill="#000"/>
<rect x="458" y="244" width="1" height="1" fill="#ffffcb"/>
<rect x="461" y="247" width="3" height="3" fill="#000"/>
<rect x="462" y="248" width="1" height="1" fill="#000"/>
<path d="M297 280.5H443" stroke="#ff00ff" stroke-width="1" stroke-dasharray="3 1" stroke-dashoffset="1"/>
<path d="M297 281.5H443" stroke="#ff00ff" stroke-width="1" stroke-dasharray="3 1" stroke-dashoffset="3"/>
<path d="M441.5 258V282" stroke="#ff00ff" stroke-width="1"/>
<path d="M442.5 258V282" stroke="#ff00ff" stroke-width="1" stroke-dasharray="1 1" stroke-dashoffset="0"/>
<rect x="265" y="273" width="32" height="16" fill="#ff00ff"/>
<rect x="267" y="275" width="28" height="12" fill="#fff"/>
<rect x="268" y="276" width="26" height="10" fill="#ff00ff"/>
<rect x="269" y="277" width="24" height="8" fill="#fff"/>
<rect x="287" y="275" width="8" height="12" fill="#ff00ff" fill-opacity="0.2"/>
<text x="272.8" y="283.7" font-size="8.5" fill="#ff00ff" textLength="16.5" lengthAdjust="spacingAndGlyphs" font-weight="bold" font-family='"Liberation Serif",serif'>abc</text>
<polygon points="292,278 292,284 295,281" fill="#000" shape-rendering="geometricPrecision"/>
<text x="266.0" y="269" font-size="12" fill="#000" textLength="122.8" lengthAdjust="spacingAndGlyphs">VBAI Calibration Folder</text>
<rect x="494" y="238" width="9" height="9" fill="#000"/>
<rect x="495" y="239" width="7" height="7" fill="#008080"/>
<rect x="514" y="233" width="121" height="19" fill="#008080"/>
<rect x="515" y="234" width="119" height="17" fill="#fff"/>
<polygon points="518.5,238.5 518.5,246.5 523,242.5" fill="#008080" shape-rendering="geometricPrecision"/>
<g shape-rendering="geometricPrecision"><circle cx="530" cy="242" r="5" fill="#000"/><path d="M527 239.500l2.500-1 1.500 1.500-1 2.500-2.500.5zM531 242l2.500-.5.800 2-2 2.200-1.500-1.500zM527.500 244.500l1.500-.5.500 1.500-1 .5z" fill="#18c8ff"/></g>
<text x="537.2" y="247" font-size="12" fill="#008080" textLength="94.3" lengthAdjust="spacingAndGlyphs">Calibration Folder</text>
<path d="M696 179.5H784" stroke="#800080" stroke-width="1" stroke-dasharray="3 1" stroke-dashoffset="0"/>
<path d="M696 180.5H784" stroke="#800080" stroke-width="1" stroke-dasharray="3 1" stroke-dashoffset="2"/>
<rect x="687" y="176" width="9" height="9" fill="#000"/>
<rect x="688" y="177" width="7" height="7" fill="#800080"/>
<rect x="696" y="280" width="88" height="3" fill="#a09c00"/>
<path d="M696 281.5H784" stroke="#000" stroke-width="1"/>
<path d="M696 281.5H784" stroke="#ffff00" stroke-width="1" stroke-dasharray="2 2" stroke-dashoffset="0"/>
<rect x="687" y="277" width="9" height="9" fill="#000"/>
<rect x="688" y="278" width="7" height="7" fill="#808000"/>
<text x="785.2" y="100" font-size="12" fill="#000" textLength="115.6" lengthAdjust="spacingAndGlyphs">Visual Inspection loop</text>
<path fill-rule="evenodd" d="M789 104H1306a5 5 0 0 1 5 5V374H1305V110H790V378H1311V384H789a5 5 0 0 1-5-5V109a5 5 0 0 1 5-5z" fill="#808080" shape-rendering="geometricPrecision"/>
<rect x="1303" y="376" width="8" height="2" fill="#808080"/>
<path d="M800 179.5H890" stroke="#800080" stroke-width="1" stroke-dasharray="3 1" stroke-dashoffset="0"/>
<path d="M800 180.5H890" stroke="#800080" stroke-width="1" stroke-dasharray="3 1" stroke-dashoffset="2"/>
<path d="M898 179.5H936" stroke="#800080" stroke-width="1" stroke-dasharray="3 1" stroke-dashoffset="2"/>
<path d="M898 180.5H936" stroke="#800080" stroke-width="1" stroke-dasharray="3 1" stroke-dashoffset="0"/>
<path d="M935.5 180V254" stroke="#800080" stroke-width="1"/>
<path d="M936.5 180V254" stroke="#800080" stroke-width="1" stroke-dasharray="1 1" stroke-dashoffset="0"/>
<path d="M959.5 180V254" stroke="#800080" stroke-width="1"/>
<path d="M960.5 180V254" stroke="#800080" stroke-width="1" stroke-dasharray="1 1" stroke-dashoffset="0"/>
<path d="M960 179.5H1004" stroke="#800080" stroke-width="1" stroke-dasharray="3 1" stroke-dashoffset="0"/>
<path d="M960 180.5H1004" stroke="#800080" stroke-width="1" stroke-dasharray="3 1" stroke-dashoffset="2"/>
<path d="M1012 179.5H1175" stroke="#800080" stroke-width="1" stroke-dasharray="3 1" stroke-dashoffset="0"/>
<path d="M1012 180.5H1175" stroke="#800080" stroke-width="1" stroke-dasharray="3 1" stroke-dashoffset="2"/>
<path d="M1183 179.5H1214" stroke="#800080" stroke-width="1" stroke-dasharray="3 1" stroke-dashoffset="3"/>
<path d="M1183 180.5H1214" stroke="#800080" stroke-width="1" stroke-dasharray="3 1" stroke-dashoffset="1"/>
<path d="M1278 179.5H1296" stroke="#800080" stroke-width="1" stroke-dasharray="3 1" stroke-dashoffset="2"/>
<path d="M1278 180.5H1296" stroke="#800080" stroke-width="1" stroke-dasharray="3 1" stroke-dashoffset="0"/>
<path d="M1311 179.5H1338" stroke="#800080" stroke-width="1" stroke-dasharray="3 1" stroke-dashoffset="3"/>
<path d="M1311 180.5H1338" stroke="#800080" stroke-width="1" stroke-dasharray="3 1" stroke-dashoffset="1"/>
<path d="M1336.5 180V254" stroke="#800080" stroke-width="1"/>
<path d="M1337.5 180V254" stroke="#800080" stroke-width="1" stroke-dasharray="1 1" stroke-dashoffset="0"/>
<rect x="748" y="220" width="37" height="1" fill="#0000ff"/>
<rect x="800" y="220" width="90" height="1" fill="#0000ff"/>
<rect x="1012" y="220" width="59" height="1" fill="#0000ff"/>
<rect x="1102" y="220" width="194" height="1" fill="#0000ff"/>
<rect x="1082" y="208" width="1" height="9" fill="#0000ff"/>
<rect x="843" y="316" width="1" height="7" fill="#0000ff"/>
<rect x="1141" y="220" width="2" height="1" fill="#fff"/>
<rect x="1146" y="220" width="2" height="1" fill="#fff"/>
<rect x="790" y="280" width="100" height="3" fill="#a09c00"/>
<path d="M790 281.5H890" stroke="#000" stroke-width="1"/>
<path d="M790 281.5H890" stroke="#ffff00" stroke-width="1" stroke-dasharray="2 2" stroke-dashoffset="2"/>
<rect x="898" y="280" width="35" height="3" fill="#a09c00"/>
<path d="M898 281.5H933" stroke="#000" stroke-width="1"/>
<path d="M898 281.5H933" stroke="#ffff00" stroke-width="1" stroke-dasharray="2 2" stroke-dashoffset="2"/>
<rect x="964" y="280" width="40" height="3" fill="#a09c00"/>
<path d="M964 281.5H1004" stroke="#000" stroke-width="1"/>
<path d="M964 281.5H1004" stroke="#ffff00" stroke-width="1" stroke-dasharray="2 2" stroke-dashoffset="0"/>
<rect x="1012" y="280" width="64" height="3" fill="#a09c00"/>
<path d="M1012 281.5H1076" stroke="#000" stroke-width="1"/>
<path d="M1012 281.5H1076" stroke="#ffff00" stroke-width="1" stroke-dasharray="2 2" stroke-dashoffset="0"/>
<rect x="1073" y="248" width="3" height="34" fill="#a09c00"/>
<path d="M1074.5 248V282" stroke="#000" stroke-width="1"/>
<path d="M1074.5 248V282" stroke="#ffff00" stroke-width="1" stroke-dasharray="2 2" stroke-dashoffset="0"/>
<rect x="1097" y="248" width="3" height="34" fill="#a09c00"/>
<path d="M1098.5 248V282" stroke="#000" stroke-width="1"/>
<path d="M1098.5 248V282" stroke="#ffff00" stroke-width="1" stroke-dasharray="2 2" stroke-dashoffset="0"/>
<rect x="1097" y="280" width="68" height="3" fill="#a09c00"/>
<path d="M1097 281.5H1165" stroke="#000" stroke-width="1"/>
<path d="M1097 281.5H1165" stroke="#ffff00" stroke-width="1" stroke-dasharray="2 2" stroke-dashoffset="1"/>
<rect x="1143" y="194" width="3" height="88" fill="#a09c00"/>
<path d="M1144.5 194V282" stroke="#000" stroke-width="1"/>
<path d="M1144.5 194V282" stroke="#ffff00" stroke-width="1" stroke-dasharray="2 2" stroke-dashoffset="2"/>
<rect x="1143" y="194" width="32" height="3" fill="#a09c00"/>
<path d="M1143 195.5H1175" stroke="#000" stroke-width="1"/>
<path d="M1143 195.5H1175" stroke="#ffff00" stroke-width="1" stroke-dasharray="2 2" stroke-dashoffset="3"/>
<rect x="1196" y="280" width="107" height="3" fill="#a09c00"/>
<path d="M1196 281.5H1303" stroke="#000" stroke-width="1"/>
<path d="M1196 281.5H1303" stroke="#ffff00" stroke-width="1" stroke-dasharray="2 2" stroke-dashoffset="0"/>
<rect x="1311" y="280" width="23" height="3" fill="#a09c00"/>
<path d="M1311 281.5H1334" stroke="#000" stroke-width="1"/>
<path d="M1311 281.5H1334" stroke="#ffff00" stroke-width="1" stroke-dasharray="2 2" stroke-dashoffset="3"/>
<circle cx="1144.500" cy="281.500" r="2.600" fill="#000" shape-rendering="geometricPrecision"/><path d="M1143.500 282.500l2-2" stroke="#ffff00" stroke-width="1" shape-rendering="geometricPrecision"/>
<path d="M863 326.5H890" stroke="#008000" stroke-width="1" stroke-dasharray="1 1"/>
<path d="M1196 257.5H1214" stroke="#008000" stroke-width="1" stroke-dasharray="1 1"/>
<path d="M1246 358.5H1263" stroke="#008000" stroke-width="1" stroke-dasharray="1 1"/>
<rect x="784" y="174" width="16" height="12" fill="#800080"/>
<rect x="786" y="176" width="12" height="8" fill="#ffffd0"/>
<polygon points="787,178 797,178 792,183.3" fill="#800080" shape-rendering="geometricPrecision"/>
<rect x="784" y="214" width="16" height="12" fill="#0000ff"/>
<rect x="786" y="216" width="12" height="8" fill="#ffffd0"/>
<polygon points="787,218 797,218 792,223.3" fill="#0000ff" shape-rendering="geometricPrecision"/>
<rect x="1295" y="174" width="16" height="12" fill="#800080"/>
<rect x="1297" y="176" width="12" height="8" fill="#ffffd0"/>
<polygon points="1298,182.5 1308,182.5 1303,177" fill="#800080" shape-rendering="geometricPrecision"/>
<rect x="1295" y="214" width="16" height="12" fill="#0000ff"/>
<rect x="1297" y="216" width="12" height="8" fill="#ffffd0"/>
<polygon points="1298,222.5 1308,222.5 1303,217" fill="#0000ff" shape-rendering="geometricPrecision"/>
<rect x="784" y="277" width="9" height="9" fill="#000"/>
<rect x="785" y="278" width="7" height="7" fill="#808000"/>
<rect x="1302" y="277" width="9" height="9" fill="#000"/>
<rect x="1303" y="278" width="7" height="7" fill="#808000"/>
<text x="716.7" y="208" font-size="12" fill="#000" textLength="58.6" lengthAdjust="spacingAndGlyphs">Initial State</text>
<rect x="716" y="212" width="32" height="16" fill="#0000ff"/>
<rect x="718" y="214" width="28" height="12" fill="#fff"/>
<rect x="719" y="215" width="26" height="10" fill="#0000ff"/>
<rect x="720" y="216" width="24" height="8" fill="#fff"/>
<rect x="737" y="216" width="7" height="8" fill="#c8c8ff"/>
<polygon points="716,212 724,212 716,220" fill="#000"/>
<polygon points="731,216.5 731,223.5 727.5,220" fill="#0000ff" shape-rendering="geometricPrecision"/>
<polygon points="733,216.5 733,223.5 736.5,220" fill="#0000ff" shape-rendering="geometricPrecision"/>
<polygon points="743,216.5 743,223.5 746.5,220" fill="#000" shape-rendering="geometricPrecision"/>
<rect x="794" y="358" width="16" height="16" fill="#0000ff"/>
<rect x="796" y="360" width="12" height="12" fill="#ffffd0"/>
<text x="802" y="370.5" font-size="13" fill="#0000ff" text-anchor="middle" font-weight="bold">i</text>
<rect x="816" y="297" width="55" height="19" fill="#0000ff"/>
<rect x="818" y="299" width="51" height="15" fill="#fff"/>
<polygon points="816,297 824,297 816,305" fill="#4a4a4a"/>
<polygon points="822.5,303 822.5,309 819.5,306" fill="#0000ff" shape-rendering="geometricPrecision"/>
<polygon points="824,303 824,309 827,306" fill="#0000ff" shape-rendering="geometricPrecision"/>
<text x="827.9" y="311" font-size="12" fill="#000" textLength="28.6" lengthAdjust="spacingAndGlyphs">Reset</text>
<polygon points="861,304 868.5,304 864.75,308" fill="#0000ff" shape-rendering="geometricPrecision"/>
<rect x="831" y="322" width="32" height="32" fill="#000"/>
<rect x="832" y="323" width="30" height="30" fill="#fff"/>
<text x="833.8" y="331" font-size="9.5" fill="#000" textLength="18.1" lengthAdjust="spacingAndGlyphs" stroke="#000" stroke-width="0.25">Step</text>
<text x="833.8" y="340.5" font-size="9.5" fill="#000" textLength="27.6" lengthAdjust="spacingAndGlyphs" stroke="#000" stroke-width="0.25">Results</text>
<text x="835.7" y="350.7" font-size="9.5" fill="#000" textLength="17.6" lengthAdjust="spacingAndGlyphs" stroke="#000" stroke-width="0.25">AND</text>
<rect x="857" y="342" width="5" height="11" fill="#000"/>
<rect x="858" y="343" width="4" height="10" fill="#fff"/>
<rect x="859" y="344" width="2" height="2" fill="#ff0000"/>
<rect x="859" y="347" width="2" height="2" fill="#ffee00"/>
<rect x="859" y="350" width="2" height="2" fill="#00e000"/>
<rect x="889" y="142" width="123" height="6" fill="url(#chk)"/>
<rect x="889" y="341" width="123" height="6" fill="url(#chk)"/>
<rect x="889" y="142" width="6" height="205" fill="url(#chk)"/>
<rect x="1006" y="142" width="6" height="205" fill="url(#chk)"/>
<rect x="889" y="142" width="123" height="1" fill="#000"/>
<rect x="889" y="346" width="123" height="1" fill="#000"/>
<rect x="889" y="142" width="1" height="205" fill="#000"/>
<rect x="1011" y="142" width="1" height="205" fill="#000"/>
<rect x="894" y="142" width="114" height="17" fill="#000"/>
<rect x="895" y="143" width="112" height="15" fill="#fff"/>
<rect x="901" y="142" width="1" height="17" fill="#000"/>
<rect x="999" y="142" width="1" height="17" fill="#000"/>
<polygon points="900,147.0 900,154.0 896,150.5" fill="#000" shape-rendering="geometricPrecision"/>
<polygon points="1000,147.0 1000,154.0 1006,150.5" fill="#000" shape-rendering="geometricPrecision"/>
<text x="904.7" y="155" font-size="12" fill="#000" textLength="78.5" lengthAdjust="spacingAndGlyphs">"Start", Default</text>
<polygon points="990,148.0 997,148.0 993.5,152.0" fill="#000" shape-rendering="geometricPrecision"/>
<rect x="889" y="176" width="9" height="9" fill="#000"/>
<rect x="890" y="177" width="7" height="7" fill="#800080"/>
<rect x="1003" y="176" width="9" height="9" fill="#000"/>
<rect x="1004" y="177" width="7" height="7" fill="#800080"/>
<rect x="889" y="277" width="9" height="9" fill="#000"/>
<rect x="890" y="278" width="7" height="7" fill="#808000"/>
<rect x="1003" y="277" width="9" height="9" fill="#000"/>
<rect x="1004" y="278" width="7" height="7" fill="#808000"/>
<rect x="889" y="322" width="9" height="9" fill="#000"/>
<rect x="890" y="323" width="7" height="7" fill="#008000"/>
<rect x="889" y="214" width="9" height="12" fill="#0000ff"/>
<rect x="890" y="215" width="7" height="10" fill="#ffffd0"/>
<text x="893.5" y="224" font-size="10" fill="#0000ff" text-anchor="middle">?</text>
<rect x="932" y="253" width="32" height="32" fill="#000"/>
<rect x="933" y="254" width="30" height="30" fill="#d0d0d0"/>
<text x="935.9" y="267" font-size="9" fill="#000" textLength="25.3" lengthAdjust="spacingAndGlyphs" stroke="#000" stroke-width="0.25">Proces</text>
<rect x="956" y="279" width="7" height="5" fill="#e4e4e4"/>
<polygon points="950.3,271.9 956.0,271.9 961.1,277.6 960.6,279.0 956.0,281.0 953.2,284.1 952.6,283.6 954.3,277.6 950.3,273.1" fill="#1c4fb4" shape-rendering="geometricPrecision"/>
<polygon points="958.3,272.5 963.4,271.9 961.1,276.5" fill="#1c4fb4" shape-rendering="geometricPrecision"/>
<rect x="1032" y="190" width="101" height="19" fill="#0000ff"/>
<rect x="1034" y="192" width="97" height="15" fill="#fff"/>
<polygon points="1039,197 1039,203 1036,200" fill="#0000ff" shape-rendering="geometricPrecision"/>
<polygon points="1040.5,197 1040.5,203 1043.5,200" fill="#0000ff" shape-rendering="geometricPrecision"/>
<text x="1044.1" y="204" font-size="12" fill="#000" textLength="74.1" lengthAdjust="spacingAndGlyphs">Get Next State</text>
<polygon points="1122.8,197 1130.2,197 1126.5,201.2" fill="#0000ff" shape-rendering="geometricPrecision"/>
<rect x="1070" y="216" width="32" height="32" fill="#000"/>
<rect x="1071" y="217" width="30" height="30" fill="#fff"/>
<g shape-rendering="geometricPrecision"><path d="M1086.200 224l2.700-3.700h4.400l2.700 3.700-2.700 3.700h-4.400zM1073 233l2.700-3.700h4.400l2.700 3.700-2.700 3.700h-4.400zM1088.200 240l2.700-3.700h4.400l2.700 3.700-2.700 3.700h-4.400z" fill="#ffc864" stroke="#2a1c00" stroke-width="1"/><path d="M1081 230l5-3.500M1083.300 225.700l3 .600-1.200 2.800M1091.500 228v5M1089 231.500l2.500 2 2.500-2M1088.500 238.800l-6.500-3.800M1082.200 238l-.6-3.200 3.200-.3" fill="none" stroke="#000" stroke-width="1"/></g>
<text x="1075.5" y="226.7" font-size="10" fill="#000" font-weight="bold" stroke="#000" stroke-width="0.25">?</text>
<rect x="1174" y="132" width="104" height="6" fill="url(#ghatch)"/>
<rect x="1174" y="205" width="104" height="6" fill="url(#ghatch)"/>
<rect x="1174" y="132" width="6" height="79" fill="url(#ghatch)"/>
<rect x="1272" y="132" width="6" height="79" fill="url(#ghatch)"/>
<rect x="1174" y="132" width="104" height="1" fill="#000"/>
<rect x="1174" y="210" width="104" height="1" fill="#000"/>
<rect x="1174" y="132" width="1" height="79" fill="#000"/>
<rect x="1277" y="132" width="1" height="79" fill="#000"/>
<rect x="1185" y="132" width="81" height="17" fill="#000"/>
<rect x="1186" y="133" width="79" height="15" fill="#fff"/>
<rect x="1193" y="132" width="1" height="17" fill="#000"/>
<rect x="1257" y="132" width="1" height="17" fill="#000"/>
<polygon points="1192,137.0 1192,144.0 1187,140.5" fill="#000" shape-rendering="geometricPrecision"/>
<polygon points="1258,137.0 1258,144.0 1264,140.5" fill="#000" shape-rendering="geometricPrecision"/>
<text x="1197.3" y="145" font-size="12" fill="#000" textLength="44.2" lengthAdjust="spacingAndGlyphs">No Error</text>
<polygon points="1248,138.0 1255,138.0 1251.5,142.0" fill="#000" shape-rendering="geometricPrecision"/>
<rect x="1174" y="176" width="9" height="9" fill="#000"/>
<rect x="1175" y="177" width="7" height="7" fill="#800080"/>
<rect x="1174" y="189" width="8" height="12" fill="#808000"/>
<rect x="1175" y="190" width="6" height="10" fill="#ffffd0"/>
<text x="1178" y="199" font-size="10" fill="#808000" text-anchor="middle">?</text>
<text x="1213.8" y="168" font-size="12" fill="#000" textLength="33.7" lengthAdjust="spacingAndGlyphs">Image</text>
<rect x="1213" y="172" width="32" height="16" fill="#800080"/>
<rect x="1214" y="173" width="30" height="14" fill="#fff"/>
<rect x="1216" y="175" width="26" height="10" fill="#800080"/>
<rect x="1217" y="176" width="24" height="8" fill="#fff"/>
<rect x="1215" y="174" width="8" height="12" fill="#800080" fill-opacity="0.22"/>
<polygon points="1217,177 1217,183 1220.5,180" fill="#000" shape-rendering="geometricPrecision"/>
<rect x="1226" y="177" width="6" height="6" fill="#800080"/>
<rect x="1227" y="178" width="4" height="4" fill="#fff"/>
<rect x="1230" y="177" width="2" height="2" fill="#fff"/>
<rect x="1229" y="178" width="1" height="2" fill="#800080"/>
<rect x="1230" y="179" width="2" height="1" fill="#800080"/>
<rect x="1164" y="253" width="32" height="32" fill="#000"/>
<rect x="1165" y="254" width="30" height="30" fill="#fff"/>
<g shape-rendering="geometricPrecision"><path d="M1170 258.500h6l1.500 1.500v18l-1.500 1.500h-6l-1.500-1.500v-18z" fill="#a8a8a8" stroke="#1a1a1a" stroke-width="1"/><path d="M1184 258.500h6l1.500 1.500v18l-1.500 1.500h-6l-1.500-1.500v-18z" fill="#a8a8a8" stroke="#1a1a1a" stroke-width="1"/><circle cx="1173" cy="263.700" r="3.600" fill="#a00000" stroke="#700000" stroke-width=".6"/><circle cx="1173" cy="274.200" r="3.600" fill="#00ff00"/><path d="M1171.300 273.800v-1.300h1.800" stroke="#ffff00" stroke-width=".9" fill="none"/><circle cx="1187" cy="263.700" r="3.500" fill="#ff0000" stroke="#ffd0d0" stroke-width=".9"/><path d="M1185.300 263.400v-1.300h1.800" stroke="#ffb0b0" stroke-width=".9" fill="none"/><circle cx="1187" cy="274.200" r="3.700" fill="#006400" stroke="#1a1a1a" stroke-width=".8"/></g>
<text x="1214.1" y="244" font-size="12" fill="#000" textLength="44.0" lengthAdjust="spacingAndGlyphs">Pass Fail</text>
<rect x="1214" y="249" width="32" height="16" fill="#008000"/>
<rect x="1215" y="250" width="30" height="14" fill="#fff"/>
<rect x="1217" y="252" width="26" height="10" fill="#008000"/>
<rect x="1218" y="253" width="24" height="8" fill="#fff"/>
<rect x="1216" y="251" width="8" height="12" fill="#008000" fill-opacity="0.28"/>
<polygon points="1218,254 1218,260 1221.5,257" fill="#000" shape-rendering="geometricPrecision"/>
<text x="1225" y="259.8" font-size="8" fill="#008000" textLength="12.3" lengthAdjust="spacingAndGlyphs" font-weight="bold">TF</text>
<text x="1213.8" y="346" font-size="12" fill="#000" textLength="24.3" lengthAdjust="spacingAndGlyphs">Stop</text>
<rect x="1213" y="350" width="32" height="16" fill="#008000"/>
<rect x="1215" y="352" width="28" height="12" fill="#fff"/>
<rect x="1216" y="353" width="26" height="10" fill="#008000"/>
<rect x="1217" y="354" width="24" height="8" fill="#fff"/>
<text x="1223" y="360.6" font-size="8" fill="#008000" textLength="12.3" lengthAdjust="spacingAndGlyphs" font-weight="bold">TF</text>
<rect x="1235" y="352" width="8" height="12" fill="#008000" fill-opacity="0.28"/>
<polygon points="1240,355 1240,361 1243.5,358" fill="#000" shape-rendering="geometricPrecision"/>
<rect x="1263" y="351" width="16" height="16" fill="#008000"/>
<rect x="1264" y="352" width="14" height="14" fill="#ffffd8"/>
<polygon points="1268.500,353.500 1273.500,353.500 1276.500,356.500 1276.500,361.500 1273.500,364.500 1268.500,364.500 1265.500,361.500 1265.500,356.500" fill="#ffffd8" stroke="#000" stroke-width="1" shape-rendering="geometricPrecision"/><circle cx="1271" cy="359" r="4.100" fill="#ff0000" shape-rendering="geometricPrecision"/>
<rect x="1333" y="253" width="17" height="32" fill="#000"/>
<rect x="1334" y="254" width="16" height="30" fill="#d0d0d0"/>
<clipPath id="pc"><rect x="1334" y="254" width="16" height="30"/></clipPath>
<text x="1339" y="261.7" font-size="9" fill="#000" textLength="18" lengthAdjust="spacingAndGlyphs" stroke="#000" stroke-width="0.25" clip-path="url(#pc)">Post</text>
<text x="1337" y="270" font-size="9" fill="#000" textLength="25.3" lengthAdjust="spacingAndGlyphs" stroke="#000" stroke-width="0.25" clip-path="url(#pc)">Proces</text>
<g shape-rendering="geometricPrecision" filter="url(#wsh)" fill="#fff" font-weight="bold">
<polygon points="1054.4,627.21 1080.34,627.21 1103.54,653.14 1101.27,659.51 1080.34,668.62 1067.6,682.72 1064.87,680.44 1072.6,653.14 1054.4,632.67" fill="#fff" shape-rendering="geometricPrecision"/>
<polygon points="1090.8,629.94 1114.01,627.21 1103.54,648.14" fill="#fff" shape-rendering="geometricPrecision"/>
<text x="1116.5" y="646" font-size="25.5" fill="#fff" textLength="130.0" lengthAdjust="spacingAndGlyphs" font-style="italic">NATIONAL</text>
<text x="1108.5" y="670.4" font-size="24.5" fill="#fff" textLength="180.0" lengthAdjust="spacingAndGlyphs" font-style="italic">INSTRUMENTS</text>
<text x="1289" y="658" font-size="7" fill="#fff">™</text>
<text x="1082.5" y="702.5" font-size="26.5" fill="#fff" textLength="92.0" lengthAdjust="spacingAndGlyphs">LabVIEW</text>
<text x="1175" y="690" font-size="7" fill="#fff">™</text>
<text x="1187.3" y="702.5" font-size="26.5" fill="#fff" textLength="157.5" lengthAdjust="spacingAndGlyphs">Student Edition</text>
</g>
<rect x="1350" y="71" width="1" height="639" fill="#fafafa"/>
<rect x="1351" y="71" width="16" height="655" fill="#f0f0f0"/>
<rect x="1351" y="207" width="15" height="486" fill="#cdcdcd"/>
<path d="M1355 82.500l3.500-3.500 3.500 3.500" fill="none" stroke="#505050" stroke-width="1.800" shape-rendering="geometricPrecision"/>
<path d="M1355 700.500l3.500 3.500 3.500-3.500" fill="none" stroke="#505050" stroke-width="1.800" shape-rendering="geometricPrecision"/>
<rect x="97" y="710" width="1254" height="16" fill="#f0f0f0"/>
<rect x="210" y="710" width="760" height="15" fill="#cdcdcd"/>
<path d="M107.500 714l-3.500 3.500 3.500 3.500" fill="none" stroke="#505050" stroke-width="1.800" shape-rendering="geometricPrecision"/>
<path d="M1341.500 714l3.500 3.500-3.500 3.500" fill="none" stroke="#505050" stroke-width="1.800" shape-rendering="geometricPrecision"/>
<rect x="1366" y="25" width="1" height="701" fill="#fafafa"/>
<rect x="5" y="709" width="92" height="17" fill="#000"/>
<rect x="6" y="710" width="91" height="15" fill="#fff"/>
<rect x="7" y="711" width="90" height="13" fill="#f0f0f0"/>
<text x="10.5" y="721" font-size="12" fill="#000" textLength="81.7" lengthAdjust="spacingAndGlyphs">Student Edition</text>
<rect x="3" y="727" width="1366" height="1" fill="#88aa4c"/>
<rect x="3" y="728" width="1366" height="8" fill="#799b3d"/>
<rect x="0" y="728" width="3" height="8" fill="#85b71c"/>
<rect x="1369" y="728" width="5" height="8" fill="#85b71c"/>
<rect x="19" y="728" width="56" height="8" fill="#64843a"/>
<rect x="20" y="729" width="54" height="7" fill="#a6bf80"/>
<rect x="21" y="730" width="52" height="6" fill="#8fad62"/>
<rect x="204" y="728" width="62" height="8" fill="#64843a"/>
<rect x="205" y="729" width="60" height="7" fill="#a6bf80"/>
<rect x="206" y="730" width="58" height="6" fill="#8fad62"/>
<rect x="267" y="728" width="61" height="8" fill="#64843a"/>
<rect x="268" y="729" width="59" height="7" fill="#a6bf80"/>
<rect x="269" y="730" width="57" height="6" fill="#8fad62"/>
<rect x="390" y="728" width="62" height="8" fill="#64843a"/>
<rect x="391" y="729" width="60" height="7" fill="#a6bf80"/>
<rect x="392" y="730" width="58" height="6" fill="#8fad62"/>
<rect x="453" y="728" width="60" height="8" fill="#64843a"/>
<rect x="454" y="729" width="58" height="7" fill="#a6bf80"/>
<rect x="455" y="730" width="56" height="6" fill="#8fad62"/>
<rect x="514" y="728" width="61" height="8" fill="#64843a"/>
<rect x="515" y="729" width="59" height="7" fill="#a6bf80"/>
<rect x="516" y="730" width="57" height="6" fill="#8fad62"/>
<rect x="328" y="728" width="55" height="8" fill="#64843a"/>
<rect x="329" y="729" width="53" height="7" fill="#a6bf80"/>
<rect x="330" y="730" width="51" height="6" fill="#a5be80"/>
<rect x="75" y="730" width="2" height="6" fill="#8fad62"/>
<rect x="384" y="730" width="1" height="6" fill="#c0d0a0"/>
<rect x="386" y="730" width="1" height="6" fill="#c0d0a0"/>
<rect x="36" y="734" width="15" height="2" fill="#d9b070"/>
<rect x="100" y="733" width="22" height="3" fill="#3a7fb0"/>
<rect x="161" y="733" width="24" height="3" fill="#8a1a2a"/>
<rect x="223" y="733" width="25" height="3" fill="#3aa0e0"/>
<rect x="283" y="733" width="28" height="3" fill="#2aa0e8"/>
<rect x="341" y="734" width="28" height="2" fill="#f0c020"/>
<rect x="409" y="733" width="24" height="3" fill="#1a6ab0"/>
<rect x="467" y="734" width="31" height="2" fill="#2a70b0"/>
<rect x="537" y="734" width="15" height="2" fill="#a08070"/>
<rect x="0" y="735" width="1" height="1" fill="#e02020"/>
<rect x="1" y="735" width="1" height="1" fill="#20c020"/>
<rect x="2" y="735" width="1" height="1" fill="#2020e0"/>
</svg>
</body></html>
